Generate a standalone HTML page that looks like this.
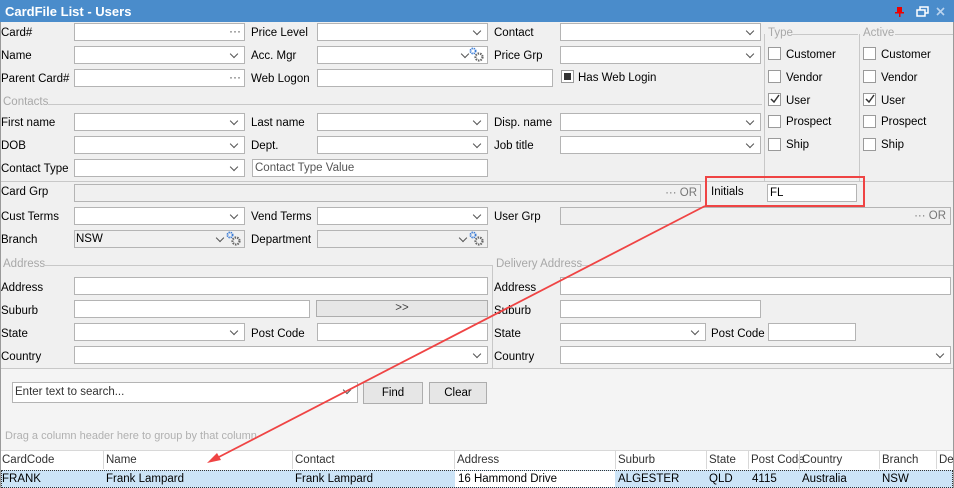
<!DOCTYPE html>
<html><head><meta charset="utf-8"><style>
*{box-sizing:border-box;margin:0;padding:0}
body{width:954px;height:488px;background:#f0f0f0;font-family:"Liberation Sans",sans-serif;font-size:11.5px;color:#000;position:relative;overflow:hidden}
.a{position:absolute}
.l{position:absolute;line-height:14px;white-space:nowrap;margin-top:1px}
.b{position:absolute;height:18px;background:#fff;border:1px solid #b4b4b4}
.g{background:#f0f0f0}
.dd::after{content:"";position:absolute;right:7px;top:4px;width:5px;height:5px;border-right:1.5px solid #555;border-bottom:1.5px solid #555;transform:rotate(45deg)}
.dots::after{content:"···";position:absolute;right:3px;top:0px;font-size:12px;color:#444;line-height:15px}
.gl{position:absolute;color:#a8a8a8;line-height:14px;margin-top:1px}
.hl{position:absolute;height:1px;background:#c8c8c8}
.vl{position:absolute;width:1px;background:#c8c8c8}
.cb{position:absolute;width:13px;height:13px;background:#fff;border:1px solid #9a9a9a}
.gear{position:absolute;width:16px;height:16px}
.btn{position:absolute;height:22px;border:1px solid #adadad;background:#e6e6e6;text-align:center;line-height:20px}
.hd{position:absolute;top:451px;height:18px;line-height:18px;border-left:1px solid #d8d8d8;padding-left:2px;color:#333}
.rc{position:absolute;top:471px;height:16px;line-height:16px;padding-left:2px}
</style></head><body>
<div class="a" style="left:0;top:0;width:954px;height:22px;background:#4a8ccb"></div>
<div class="l" style="left:5px;top:4px;color:#fff;font-weight:bold;font-size:13px">CardFile List - Users</div>
<svg class="a" style="left:893px;top:5px" width="60" height="14"><rect x="4" y="2" width="5" height="6" fill="#e00"/><rect x="2" y="7" width="9" height="1.5" fill="#e00"/><rect x="6" y="8" width="1.5" height="4" fill="#e00"/><rect x="24" y="5" width="8" height="6" fill="none" stroke="#fff" stroke-width="1.5"/><path d="M27 5V2h8v6h-3" fill="none" stroke="#fff" stroke-width="1.5"/><path d="M44 3l7 7M51 3l-7 7" stroke="#b9d3ee" stroke-width="1.6"/></svg>
<div class="a" style="left:0;top:22px;width:1px;height:466px;background:#9a9a9a"></div>
<div class="a" style="left:953px;top:22px;width:1px;height:466px;background:#9a9a9a"></div>

<div class="l" style="left:1px;top:25px">Card#</div><div class="b dots" style="left:74px;top:23px;width:171px"></div>
<div class="l" style="left:251px;top:25px">Price Level</div><div class="b dd" style="left:317px;top:23px;width:171px"></div>
<div class="l" style="left:494px;top:25px">Contact</div><div class="b dd" style="left:560px;top:23px;width:201px"></div>
<div class="l" style="left:1px;top:48px">Name</div><div class="b dd" style="left:74px;top:46px;width:171px"></div>
<div class="l" style="left:251px;top:48px">Acc. Mgr</div><div class="b" style="left:317px;top:46px;width:171px"><span class="dd" style="position:absolute;right:12px;top:0;width:20px;height:16px"></span></div>
<div class="l" style="left:494px;top:48px">Price Grp</div><div class="b dd" style="left:560px;top:46px;width:201px"></div>
<div class="l" style="left:1px;top:71px">Parent Card#</div><div class="b dots" style="left:74px;top:69px;width:171px"></div>
<div class="l" style="left:251px;top:71px">Web Logon</div><div class="b" style="left:317px;top:69px;width:236px"></div>
<div class="cb" style="left:561px;top:70px"><div style="position:absolute;left:2px;top:2px;width:7px;height:7px;background:#333"></div></div>
<div class="l" style="left:578px;top:70px">Has Web Login</div>

<div class="gl" style="left:3px;top:94px">Contacts</div><div class="hl" style="left:48px;top:104px;width:714px"></div>
<div class="l" style="left:1px;top:115px">First name</div><div class="b dd" style="left:74px;top:113px;width:171px"></div>
<div class="l" style="left:251px;top:115px">Last name</div><div class="b dd" style="left:317px;top:113px;width:171px"></div>
<div class="l" style="left:494px;top:115px">Disp. name</div><div class="b dd" style="left:560px;top:113px;width:201px"></div>
<div class="l" style="left:1px;top:138px">DOB</div><div class="b dd" style="left:74px;top:136px;width:171px"></div>
<div class="l" style="left:251px;top:138px">Dept.</div><div class="b dd" style="left:317px;top:136px;width:171px"></div>
<div class="l" style="left:494px;top:138px">Job title</div><div class="b dd" style="left:560px;top:136px;width:201px"></div>
<div class="l" style="left:1px;top:161px">Contact Type</div><div class="b dd" style="left:74px;top:159px;width:171px"></div>
<div class="b" style="left:252px;top:159px;width:236px;color:#555;padding-left:2px;line-height:17px">Contact Type Value</div>

<div class="gl" style="left:768px;top:25px">Type</div><div class="hl" style="left:792px;top:34px;width:66px"></div>
<div class="vl" style="left:764px;top:34px;height:148px"></div><div class="vl" style="left:859px;top:34px;height:148px"></div>
<div class="gl" style="left:863px;top:25px">Active</div><div class="hl" style="left:895px;top:34px;width:58px"></div>
<div class="cb" style="left:768px;top:47px"></div><div class="l" style="left:786px;top:47px">Customer</div>
<div class="cb" style="left:768px;top:70px"></div><div class="l" style="left:786px;top:70px">Vendor</div>
<div class="cb" style="left:768px;top:93px"></div><div class="l" style="left:786px;top:93px">User</div>
<div class="cb" style="left:768px;top:115px"></div><div class="l" style="left:786px;top:114px">Prospect</div>
<div class="cb" style="left:768px;top:138px"></div><div class="l" style="left:786px;top:137px">Ship</div>
<div class="cb" style="left:863px;top:47px"></div><div class="l" style="left:881px;top:47px">Customer</div>
<div class="cb" style="left:863px;top:70px"></div><div class="l" style="left:881px;top:70px">Vendor</div>
<div class="cb" style="left:863px;top:93px"></div><div class="l" style="left:881px;top:93px">User</div>
<div class="cb" style="left:863px;top:115px"></div><div class="l" style="left:881px;top:114px">Prospect</div>
<div class="cb" style="left:863px;top:138px"></div><div class="l" style="left:881px;top:137px">Ship</div>
<svg class="a" style="left:768px;top:93px" width="13" height="13"><path d="M3 6l3 3 5-7" fill="none" stroke="#333" stroke-width="1.5"/></svg>
<svg class="a" style="left:863px;top:93px" width="13" height="13"><path d="M3 6l3 3 5-7" fill="none" stroke="#333" stroke-width="1.5"/></svg>

<div class="hl" style="left:1px;top:181px;width:952px"></div>
<div class="l" style="left:1px;top:184px">Card Grp</div>
<div class="b g" style="left:74px;top:184px;width:627px"><span style="position:absolute;right:3px;top:1px;color:#777;line-height:14px">··· OR</span></div>
<div class="l" style="left:711px;top:184px">Initials</div>
<div class="b" style="left:767px;top:184px;width:90px;padding-left:2px;line-height:17px">FL</div>
<div class="a" style="left:705px;top:176px;width:160px;height:31px;border:2px solid #ef4444"></div>

<div class="l" style="left:1px;top:209px">Cust Terms</div><div class="b dd" style="left:74px;top:207px;width:171px"></div>
<div class="l" style="left:251px;top:209px">Vend Terms</div><div class="b dd" style="left:317px;top:207px;width:171px"></div>
<div class="l" style="left:494px;top:209px">User Grp</div>
<div class="b g" style="left:560px;top:207px;width:391px"><span style="position:absolute;right:4px;top:1px;color:#777;line-height:14px">··· OR</span></div>
<div class="l" style="left:1px;top:232px">Branch</div>
<div class="b g" style="left:74px;top:230px;width:171px;padding-left:1px;line-height:17px">NSW<span class="dd" style="position:absolute;right:14px;top:0;width:20px;height:16px"></span></div>
<div class="l" style="left:251px;top:232px">Department</div>
<div class="b g" style="left:317px;top:230px;width:171px"><span class="dd" style="position:absolute;right:14px;top:0;width:20px;height:16px"></span></div>
<svg class="gear" style="left:226px;top:231px" viewBox="0 0 16 16"><circle cx="4" cy="4" r="2.6" fill="none" stroke="#3a7bd5" stroke-width="1.8" stroke-dasharray="1.3 0.8"/><circle cx="10" cy="10" r="3.5" fill="none" stroke="#666" stroke-width="2.2" stroke-dasharray="1.5 1"/></svg>
<svg class="gear" style="left:469px;top:231px" viewBox="0 0 16 16"><circle cx="4" cy="4" r="2.6" fill="none" stroke="#3a7bd5" stroke-width="1.8" stroke-dasharray="1.3 0.8"/><circle cx="10" cy="10" r="3.5" fill="none" stroke="#666" stroke-width="2.2" stroke-dasharray="1.5 1"/></svg>
<svg class="gear" style="left:469px;top:47px" viewBox="0 0 16 16"><circle cx="4" cy="4" r="2.6" fill="none" stroke="#3a7bd5" stroke-width="1.8" stroke-dasharray="1.3 0.8"/><circle cx="10" cy="10" r="3.5" fill="none" stroke="#666" stroke-width="2.2" stroke-dasharray="1.5 1"/></svg>

<div class="gl" style="left:3px;top:256px">Address</div><div class="hl" style="left:44px;top:265px;width:448px"></div>
<div class="vl" style="left:492px;top:265px;height:103px"></div>
<div class="gl" style="left:496px;top:256px">Delivery Address</div><div class="hl" style="left:580px;top:265px;width:373px"></div>
<div class="l" style="left:1px;top:280px">Address</div><div class="b" style="left:74px;top:277px;width:414px"></div>
<div class="l" style="left:1px;top:303px">Suburb</div><div class="b" style="left:74px;top:300px;width:236px"></div>
<div class="btn" style="left:316px;top:300px;width:172px;height:17px;line-height:15px;color:#444">&gt;&gt;</div>
<div class="l" style="left:1px;top:326px">State</div><div class="b dd" style="left:74px;top:323px;width:171px"></div>
<div class="l" style="left:251px;top:326px">Post Code</div><div class="b" style="left:317px;top:323px;width:171px"></div>
<div class="l" style="left:1px;top:349px">Country</div><div class="b dd" style="left:74px;top:346px;width:414px"></div>
<div class="l" style="left:494px;top:280px">Address</div><div class="b" style="left:560px;top:277px;width:391px"></div>
<div class="l" style="left:494px;top:303px">Suburb</div><div class="b" style="left:560px;top:300px;width:201px"></div>
<div class="l" style="left:494px;top:326px">State</div><div class="b dd" style="left:560px;top:323px;width:146px"></div>
<div class="l" style="left:711px;top:326px">Post Code</div><div class="b" style="left:768px;top:323px;width:88px"></div>
<div class="l" style="left:494px;top:349px">Country</div><div class="b dd" style="left:560px;top:346px;width:391px"></div>
<div class="hl" style="left:1px;top:368px;width:952px"></div>

<div class="a" style="left:1px;top:369px;width:952px;height:82px;background:#f4f4f4"></div>
<div class="b dd" style="left:12px;top:382px;width:346px;height:21px;color:#333;padding-left:2px;line-height:19px">Enter text to search...</div>
<div class="btn" style="left:363px;top:382px;width:60px">Find</div>
<div class="btn" style="left:429px;top:382px;width:58px">Clear</div>
<div class="l" style="left:5px;top:428px;color:#b0b0b0;font-size:11px">Drag a column header here to group by that column</div>

<div class="a" style="left:1px;top:450px;width:952px;height:20px;background:#fff;border-top:1px solid #d8d8d8"></div>
<div class="hd" style="left:0;border-left:none">CardCode</div>
<div class="hd" style="left:103px">Name</div>
<div class="hd" style="left:292px">Contact</div>
<div class="hd" style="left:454px">Address</div>
<div class="hd" style="left:615px">Suburb</div>
<div class="hd" style="left:706px">State</div>
<div class="hd" style="left:748px">Post Code</div>
<div class="hd" style="left:799px">Country</div>
<div class="hd" style="left:879px">Branch</div>
<div class="hd" style="left:936px">De</div>
<div class="a" style="left:1px;top:470px;width:952px;height:18px;background:#cce4f7;border:1px dotted #333"></div>
<div class="a" style="left:455px;top:471px;width:160px;height:16px;background:#fff"></div>
<div class="rc" style="left:0">FRANK</div>
<div class="rc" style="left:104px">Frank Lampard</div>
<div class="rc" style="left:293px">Frank Lampard</div>
<div class="rc" style="left:456px">16 Hammond Drive</div>
<div class="rc" style="left:616px">ALGESTER</div>
<div class="rc" style="left:707px">QLD</div>
<div class="rc" style="left:750px">4115</div>
<div class="rc" style="left:800px">Australia</div>
<div class="rc" style="left:880px">NSW</div>

<svg class="a" style="left:0;top:0" width="954" height="488"><line x1="705" y1="206" x2="215" y2="459" stroke="#ef4444" stroke-width="1.8"/><path d="M207 463l14-3-4-7z" fill="#ef4444"/></svg>
</body></html>
